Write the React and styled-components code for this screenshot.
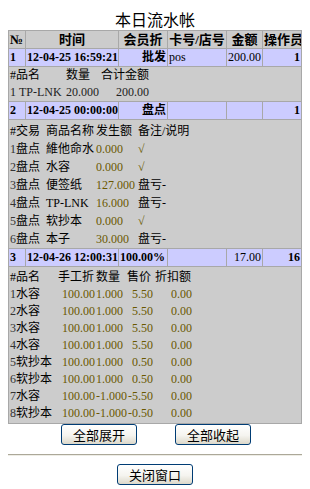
import React from 'react';
import styled, { createGlobalStyle } from 'styled-components';

const GlobalStyle = createGlobalStyle`
  html, body { background: #ffffff; }
  body {
    margin: 8px;
    font-family: "Liberation Serif", "Noto Sans CJK SC", serif;
    color: #000;
  }
  * { box-sizing: border-box; }
`;

const Title = styled.h1`
  margin: 0;
  height: 22px;
  line-height: 22px;
  font-size: 16px;
  font-weight: normal;
  text-align: center;
  font-family: "Noto Sans CJK SC", sans-serif;
`;

const Table = styled.div`
  display: grid;
  grid-template-columns: 17px 93px 49px 59px 36px 39px;
  border-left: 1px solid #a8a8a8;
  border-top: 1px solid #a8a8a8;
`;

const Cell = styled.div`
  height: 18px;
  border-right: 1px solid #a8a8a8;
  border-bottom: 1px solid #a8a8a8;
  background: ${(p) => (p.$head ? '#cccccc' : '#ccccff')};
  font-size: ${(p) => (p.$head ? '13px' : '12px')};
  font-weight: ${(p) => (p.$bold ? 'bold' : 'normal')};
  text-align: ${(p) => p.$align || 'left'};
  line-height: 17px;
  padding: 0 1px 0 1px;
  white-space: nowrap;
  overflow: hidden;
`;

const Detail = styled.div`
  grid-column: 1 / -1;
  background: #cccccc;
  border-right: 1px solid #a8a8a8;
  border-bottom: 1px solid #a8a8a8;
  padding: ${(p) => p.$pad};
`;

const DetailGrid = styled.div`
  display: grid;
  grid-template-columns: ${(p) => p.$cols};
  grid-auto-rows: ${(p) => p.$row}px;
  font-size: 12px;
  line-height: ${(p) => p.$row}px;
  font-family: "Liberation Serif", "Noto Sans CJK SC", serif;
`;

const tones = {
  num: '#6a5800',
  dark: '#222222',
  idx: '#333333',
};

const DCell = styled.span`
  white-space: nowrap;
  text-align: ${(p) => p.$align || 'left'};
  padding-right: ${(p) => p.$pr || 0}px;
  color: ${(p) => tones[p.$tone] || '#000'};
`;

const ButtonRow = styled.div`
  display: flex;
  justify-content: center;
  gap: 38px;
  margin-top: 0;
  padding-left: 2px;
`;

const Button = styled.button`
  width: 76px;
  height: 21px;
  margin: 0;
  padding: 0;
  border: 1px solid #003c74;
  border-radius: 3px;
  background: linear-gradient(#ffffff, #f5f4ef 55%, #dcd8ca);
  font-family: "Noto Sans CJK SC", sans-serif;
  font-size: 13px;
  line-height: 19px;
  color: #000;
`;

const Rule = styled.hr`
  margin: 9px -8px 0;
  border: 0;
  height: 0;
  border-top: 1px solid #aca899;
  border-bottom: 1px solid #eeede6;
`;

const CloseRow = styled.div`
  display: flex;
  justify-content: center;
  margin-top: 8px;
`;

const headers = [
  { t: '№', a: 'left' },
  { t: '时间', a: 'center' },
  { t: '会员折', a: 'center' },
  { t: '卡号/店号', a: 'center' },
  { t: '金额', a: 'center' },
  { t: '操作员', a: 'center' },
];

function MainRow({ no, time, disc, card, amount, op }) {
  return (
    <>
      <Cell $bold>{no}</Cell>
      <Cell $bold>{time}</Cell>
      <Cell $bold $align={disc.endsWith('%') ? 'left' : 'right'}>{disc}</Cell>
      <Cell>{card}</Cell>
      <Cell $align="right">{amount}</Cell>
      <Cell $bold $align="right">{op}</Cell>
    </>
  );
}

const sale1 = [['1', 'TP-LNK', '20.000', '200.00']];

const stock = [
  ['1', '盘点', '維他命水', '0.000', '√'],
  ['2', '盘点', '水容', '0.000', '√'],
  ['3', '盘点', '便签纸', '127.000', '盘亏-'],
  ['4', '盘点', 'TP-LNK', '16.000', '盘亏-'],
  ['5', '盘点', '软抄本', '0.000', '√'],
  ['6', '盘点', '本子', '30.000', '盘亏-'],
];

const sale3 = [
  ['1', '水容', '100.00', '1.000', '5.50', '0.00'],
  ['2', '水容', '100.00', '1.000', '5.50', '0.00'],
  ['3', '水容', '100.00', '1.000', '5.50', '0.00'],
  ['4', '水容', '100.00', '1.000', '5.50', '0.00'],
  ['5', '软抄本', '100.00', '1.000', '0.50', '0.00'],
  ['6', '软抄本', '100.00', '1.000', '0.50', '0.00'],
  ['7', '水容', '100.00', '-1.000', '-5.50', '0.00'],
  ['8', '软抄本', '100.00', '-1.000', '-0.50', '0.00'],
];

export default function App() {
  return (
    <>
      <GlobalStyle />
      <Title>本日流水帐</Title>
      <Table>
        {headers.map((h) => (
          <Cell key={h.t} $head $bold $align={h.a}>{h.t}</Cell>
        ))}

        <MainRow no="1" time="12-04-25 16:59:21" disc="批发" card="pos" amount="200.00" op="1" />
        <Detail $pad="0 0 0 1px">
          <DetailGrid $cols="6px 50px 35px 48px" $row={17}>
            <DCell>#</DCell>
            <DCell>品名</DCell>
            <DCell>数量</DCell>
            <DCell>合计金额</DCell>
            {sale1.map((r) => (
              <React.Fragment key={r[0]}>
                <DCell $tone="dark">{r[0]}</DCell>
                <DCell $tone="dark">&nbsp;{r[1]}</DCell>
                <DCell $tone="dark">{r[2]}</DCell>
                <DCell $tone="dark" $align="right">{r[3]}</DCell>
              </React.Fragment>
            ))}
          </DetailGrid>
        </Detail>

        <MainRow no="2" time="12-04-25 00:00:00" disc="盘点" card="" amount="" op="1" />
        <Detail $pad="2px 0 0 1px">
          <DetailGrid $cols="6px 30px 50px 42px 1fr" $row={18}>
            <DCell>#</DCell>
            <DCell>交易</DCell>
            <DCell>商品名称</DCell>
            <DCell>发生额</DCell>
            <DCell>备注/说明</DCell>
            {stock.map((r) => (
              <React.Fragment key={r[0]}>
                <DCell $tone="idx">{r[0]}</DCell>
                <DCell>{r[1]}</DCell>
                <DCell>{r[2]}</DCell>
                <DCell $tone="num">{r[3]}</DCell>
                <DCell $tone={r[4] === '√' ? 'num' : undefined}>{r[4]}</DCell>
              </React.Fragment>
            ))}
          </DetailGrid>
        </Detail>

        <MainRow no="3" time="12-04-26 12:00:31" disc="100.00%" card="" amount="17.00" op="16" />
        <Detail $pad="2px 0 1px 1px">
          <DetailGrid $cols="6px 42px 38px 31px 28px 38px" $row={17}>
            <DCell>#</DCell>
            <DCell>品名</DCell>
            <DCell>手工折</DCell>
            <DCell>数量</DCell>
            <DCell>售价</DCell>
            <DCell>折扣额</DCell>
            {sale3.map((r) => (
              <React.Fragment key={r[0]}>
                <DCell $tone="idx">{r[0]}</DCell>
                <DCell>{r[1]}</DCell>
                <DCell $tone="num" $align="right" $pr={1}>{r[2]}</DCell>
                <DCell $tone="num" $align="right" $pr={4}>{r[3]}</DCell>
                <DCell $tone="num" $align="right" $pr={2}>{r[4]}</DCell>
                <DCell $tone="num" $align="right" $pr={1}>{r[5]}</DCell>
              </React.Fragment>
            ))}
          </DetailGrid>
        </Detail>
      </Table>

      <ButtonRow>
        <Button type="button">全部展开</Button>
        <Button type="button">全部收起</Button>
      </ButtonRow>
      <Rule />
      <CloseRow>
        <Button type="button">关闭窗口</Button>
      </CloseRow>
    </>
  );
}
